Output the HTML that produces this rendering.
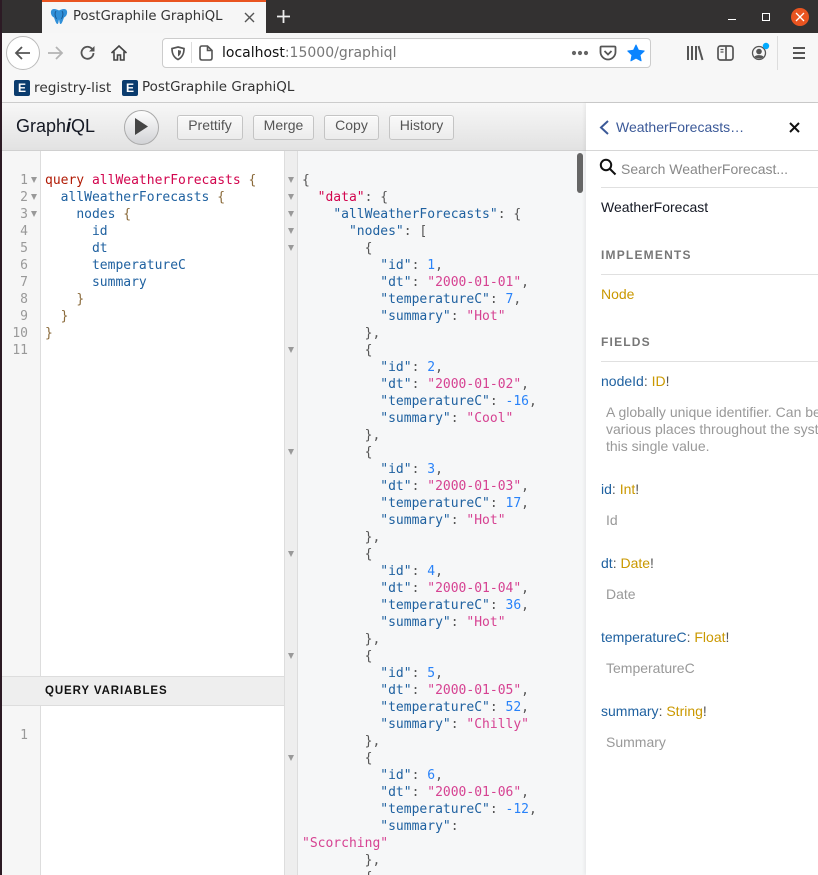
<!DOCTYPE html>
<html><head><meta charset="utf-8"><style>
html,body{margin:0;padding:0;width:818px;height:875px;overflow:hidden;background:#fff}
body{position:relative;font-family:"Liberation Sans",sans-serif}
.a{position:absolute}
pre{position:absolute;margin:0;font:13px/17px "DejaVu Sans Mono",monospace;white-space:pre}
.ui{font-family:"DejaVu Sans",sans-serif;position:absolute;white-space:nowrap}
.k{color:#b11a04}.d{color:#d2054e}.b{color:#555}.f{color:#1f61a0}
.s{color:#d64292}.n{color:#2882f9}.p{color:#555}.q{color:#1f61a0}.r{color:#d2054e}
.br{color:#8a6a3a}
.btn{position:absolute;top:115px;height:23px;border:1px solid #c4c4c4;border-radius:3px;background:linear-gradient(#f9f9f9,#ececec);box-shadow:0 1px 0 #fff inset;color:#555;font-size:14px;line-height:19px;text-align:center;box-sizing:content-box}
.m{position:absolute;width:0;height:0;border-left:3.5px solid transparent;border-right:3.5px solid transparent;border-top:6px solid #999}
.h{position:absolute;left:601px;font-size:14px;white-space:nowrap;line-height:17px}
.h i{font-style:normal;color:#1f61a0}.h u{text-decoration:none;color:#ca9800}.h b{font-weight:normal;color:#555}
.g{position:absolute;left:606px;width:212px;overflow:hidden;font-size:14px;line-height:17px;color:#999;white-space:nowrap}
.t{position:absolute;left:601px;font-size:12px;font-weight:bold;letter-spacing:1.2px;color:#777;line-height:14px}
.hr{position:absolute;left:601px;width:217px;height:1px;background:#e0e0e0}
</style></head><body>
<!-- left strip -->
<div class="a" style="left:0;top:0;width:2px;height:875px;background:#2c1a24"></div>
<!-- title bar -->
<div class="a" style="left:2px;top:0;width:816px;height:33px;background:#333131"></div>
<div class="a" style="left:42px;top:0;width:224px;height:33px;background:#f6f6f6"></div>
<div class="a" style="left:42px;top:0;width:224px;height:2px;background:#e95420"></div>
<svg class="a" style="left:50px;top:8px" width="18" height="18" viewBox="0 0 18 18"><path d="M4 1C1.500 1 .5 3 1 5.500C1.500 8 3 9 4 9.500C5 12 6 16 7.500 16C8.500 16 8.500 13 9 11.500C9.500 13 9.500 16 10.500 16C12 16 13 12 14 9.500C15 9 16.500 8 17 5.500C17.500 3 16.500 1 14 1C12 1 10 2 9 2.500C8 2 6 1 4 1Z" fill="#2f8fd8"/><path d="M6 3C4.500 5 5 8 6.500 11M12 3C13.500 5 13 8 11.500 11" stroke="#1a5a94" fill="none"/></svg>
<div class="ui" style="left:73px;top:8px;font-size:13.200px;line-height:18px;color:#333">PostGraphile GraphiQL</div>
<svg class="a" style="left:244px;top:12px" width="11" height="11"><path d="M1 1L10 10M10 1L1 10" stroke="#555" stroke-width="1.400"/></svg>
<svg class="a" style="left:276px;top:9px" width="15" height="15"><path d="M7.500 1V14M1 7.500H14" stroke="#eee" stroke-width="1.800"/></svg>
<div class="a" style="left:728px;top:19px;width:8px;height:1px;background:#fff"></div>
<div class="a" style="left:762px;top:13px;width:6px;height:6px;border:1.500px solid #fff"></div>
<div class="a" style="left:791px;top:8px;width:18px;height:18px;border-radius:50%;background:#e95420"></div>
<svg class="a" style="left:795px;top:12px" width="10" height="10"><path d="M1 1L9 9M9 1L1 9" stroke="#fff" stroke-width="1.300"/></svg>
<!-- nav bar -->
<div class="a" style="left:2px;top:33px;width:816px;height:70px;background:#f7f7f7"></div>
<div class="a" style="left:2px;top:102px;width:816px;height:1px;background:#ccc"></div>
<div class="a" style="left:6px;top:36px;width:32px;height:32px;border:1px solid #bbb;border-radius:50%;background:#fff"></div>
<svg class="a" style="left:13px;top:43px" width="20" height="20" fill="none" stroke="#555" stroke-width="1.800"><path d="M17 10H3M9 4L3 10L9 16"/></svg>
<svg class="a" style="left:46px;top:43px" width="20" height="20" fill="none" stroke="#b4b4b4" stroke-width="1.800"><path d="M2 10H16M10 4L16 10L10 16"/></svg>
<svg class="a" style="left:79px;top:44px" width="18" height="18" fill="none" stroke="#555" stroke-width="1.800"><path d="M14.500 9A6 6 0 1 1 12.500 4.300L15 6.500"/><path d="M15.500 2V7.500H10" fill="#555" stroke="none"/></svg>
<svg class="a" style="left:110px;top:44px" width="18" height="18" fill="none" stroke="#444" stroke-width="1.600"><path d="M1.500 9L9 2L16.500 9M4 7.500V16H7.500V11H10.500V16H14V7.500"/></svg>
<div class="a" style="left:162px;top:38px;width:487px;height:28px;border:1px solid #ccc;border-radius:4px;background:#fff"></div>
<svg class="a" style="left:170px;top:45px" width="16" height="16" fill="none" stroke="#555" stroke-width="1.700"><path d="M8 2L14 3.500C14 8 13 12 8 14.500C3 12 2 8 2 3.500Z"/><path d="M8 5L11 5.800C11 8 10.500 10 8 11.500Z" fill="#555" stroke="none"/></svg>
<div class="a" style="left:191px;top:42px;width:1px;height:21px;background:#ddd"></div>
<svg class="a" style="left:198px;top:45px" width="16" height="17" fill="none" stroke="#555" stroke-width="1.600"><path d="M2 3Q2 1 4 1H9.500L14 5.500V13Q14 15 12 15H4Q2 15 2 13ZM9.500 1V5.500H14"/></svg>
<div class="ui" style="left:222px;top:44px;font-size:14px;line-height:18px;color:#111">localhost<span style="color:#777">:15000/graphiql</span></div>
<svg class="a" style="left:571px;top:50px" width="18" height="6" fill="#666"><circle cx="3" cy="3" r="2.100"/><circle cx="9" cy="3" r="2.100"/><circle cx="15" cy="3" r="2.100"/></svg>
<svg class="a" style="left:599px;top:45px" width="18" height="16" fill="none" stroke="#555" stroke-width="1.800"><path d="M2.500 1.500H15.500Q16.500 1.500 16.500 2.500V7C16.500 11 13 14.500 9 14.500C5 14.500 1.500 11 1.500 7V2.500Q1.500 1.500 2.500 1.500Z"/><path d="M5.500 6L9 9.500L12.500 6"/></svg>
<svg class="a" style="left:627px;top:44px" width="18" height="18"><path d="M9 1L11.500 6.300L17.200 7L13 11L14.100 16.800L9 14L3.900 16.800L5 11L.8 7L6.500 6.300Z" fill="#0a84ff" stroke="#0a84ff" stroke-linejoin="round"/></svg>
<svg class="a" style="left:686px;top:45px" width="18" height="16" fill="none" stroke="#555" stroke-width="2"><path d="M2 1V15M6 1V15M10 1V15M12.500 1L16.500 15"/></svg>
<svg class="a" style="left:717px;top:45px" width="17" height="16" fill="none" stroke="#555" stroke-width="1.700"><rect x="1" y="1" width="15" height="14" rx="2.500"/><path d="M9 1V15"/><path d="M3.500 4.500H6.500M3.500 7H6.500" stroke-width="1.200"/></svg>
<svg class="a" style="left:750px;top:42px" width="22" height="20"><circle cx="9" cy="11" r="6.500" fill="none" stroke="#555" stroke-width="1.300"/><circle cx="9" cy="9.500" r="2.800" fill="#555"/><path d="M4.500 15C5 12.500 13 12.500 13.500 15C11 17 7 17 4.500 15Z" fill="#555"/><circle cx="16" cy="4" r="3.200" fill="#0af"/></svg>
<div class="a" style="left:777px;top:36px;width:1px;height:34px;background:#ddd"></div>
<svg class="a" style="left:792px;top:46px" width="14" height="14" fill="none" stroke="#555" stroke-width="2"><path d="M1 2H13M1 7H13M1 12H13"/></svg>
<!-- bookmarks -->
<div class="a" style="left:14px;top:80px;width:16px;height:16px;background:#0b3c6e;border-radius:2px;color:#fff;font:bold 12px/16px 'Liberation Sans',sans-serif;text-align:center">E</div>
<div class="ui" style="left:34px;top:79px;font-size:13.700px;line-height:18px;color:#333">registry-list</div>
<div class="a" style="left:122px;top:80px;width:16px;height:16px;background:#0b3c6e;border-radius:2px;color:#fff;font:bold 12px/16px 'Liberation Sans',sans-serif;text-align:center">E</div>
<div class="ui" style="left:142px;top:79px;font-size:13.450px;line-height:18px;color:#333">PostGraphile GraphiQL</div>
<!-- toolbar -->
<div class="a" style="left:2px;top:103px;width:584px;height:47px;background:linear-gradient(#f7f7f7,#e2e2e2)"></div>
<div class="a" style="left:2px;top:150px;width:584px;height:1px;background:#d0d0d0"></div>
<div class="a" style="left:16px;top:116px;font-size:18px;line-height:21px;color:#141823;white-space:nowrap">Graph<em style="font-style:italic;font-weight:bold;padding:0">i</em>QL</div>
<div class="a" style="left:124px;top:110px;width:33px;height:33px;border:1px solid #aaa;border-radius:50%;background:linear-gradient(#fdfdfd,#d2d3d6)"></div>
<svg class="a" style="left:135px;top:118px" width="14" height="17"><path d="M0 0L13 8.500L0 17Z" fill="#444"/></svg>
<div class="btn" style="left:177px;width:64px">Prettify</div>
<div class="btn" style="left:253px;width:59px">Merge</div>
<div class="btn" style="left:324px;width:53px">Copy</div>
<div class="btn" style="left:389px;width:63px">History</div>
<!-- query editor -->
<div class="a" style="left:2px;top:151px;width:38px;height:724px;background:#f6f6f6"></div>
<div class="a" style="left:40px;top:151px;width:1px;height:724px;background:#ddd"></div>
<pre style="left:2px;top:172px;width:26px;text-align:right;color:#999">1
2
3
4
5
6
7
8
9
10
11</pre>
<i class="m" style="left:31px;top:177px"></i><i class="m" style="left:31px;top:194px"></i><i class="m" style="left:31px;top:211px"></i>
<pre style="left:45px;top:172px"><span class="k">query</span> <span class="d">allWeatherForecasts</span> <span class="br">{</span>
  <span class="f">allWeatherForecasts</span> <span class="br">{</span>
    <span class="f">nodes</span> <span class="br">{</span>
      <span class="f">id</span>
      <span class="f">dt</span>
      <span class="f">temperatureC</span>
      <span class="f">summary</span>
    <span class="br">}</span>
  <span class="br">}</span>
<span class="br">}</span></pre>
<!-- variables header -->
<div class="a" style="left:2px;top:676px;width:282px;height:30px;background:#eee;border-top:1px solid #ddd;border-bottom:1px solid #ddd;box-sizing:border-box"></div>
<div class="a" style="left:45px;top:684px;font-size:11.500px;font-weight:bold;letter-spacing:.9px;line-height:14px;color:#111">QUERY VARIABLES</div>
<pre style="left:2px;top:727px;width:26px;text-align:right;color:#999">1</pre>
<!-- result -->
<div class="a" style="left:284px;top:151px;width:13px;height:724px;background:#eee"></div>
<div class="a" style="left:284px;top:151px;width:1px;height:724px;background:#ddd"></div>
<div class="a" style="left:297px;top:151px;width:1px;height:724px;background:#ddd"></div>
<div class="a" style="left:298px;top:151px;width:288px;height:724px;background:#f6f7f8"></div>
<i class="m" style="left:288px;top:177px"></i><i class="m" style="left:288px;top:194px"></i><i class="m" style="left:288px;top:211px"></i><i class="m" style="left:288px;top:228px"></i><i class="m" style="left:288px;top:245px"></i><i class="m" style="left:288px;top:347px"></i><i class="m" style="left:288px;top:449px"></i><i class="m" style="left:288px;top:551px"></i><i class="m" style="left:288px;top:653px"></i><i class="m" style="left:288px;top:755px"></i>
<div class="a" style="left:298px;top:151px;width:280px;height:724px;overflow:hidden">
<pre style="left:4px;top:21px"><span class="p">{</span>
  <span class="r">"data"</span><span class="p">: {</span>
    <span class="q">"allWeatherForecasts"</span><span class="p">: {</span>
      <span class="q">"nodes"</span><span class="p">: [</span>
        <span class="p">{</span>
          <span class="q">"id"</span><span class="p">:</span> <span class="n">1</span><span class="p">,</span>
          <span class="q">"dt"</span><span class="p">:</span> <span class="s">"2000-01-01"</span><span class="p">,</span>
          <span class="q">"temperatureC"</span><span class="p">:</span> <span class="n">7</span><span class="p">,</span>
          <span class="q">"summary"</span><span class="p">:</span> <span class="s">"Hot"</span>
        <span class="p">},</span>
        <span class="p">{</span>
          <span class="q">"id"</span><span class="p">:</span> <span class="n">2</span><span class="p">,</span>
          <span class="q">"dt"</span><span class="p">:</span> <span class="s">"2000-01-02"</span><span class="p">,</span>
          <span class="q">"temperatureC"</span><span class="p">:</span> <span class="n">-16</span><span class="p">,</span>
          <span class="q">"summary"</span><span class="p">:</span> <span class="s">"Cool"</span>
        <span class="p">},</span>
        <span class="p">{</span>
          <span class="q">"id"</span><span class="p">:</span> <span class="n">3</span><span class="p">,</span>
          <span class="q">"dt"</span><span class="p">:</span> <span class="s">"2000-01-03"</span><span class="p">,</span>
          <span class="q">"temperatureC"</span><span class="p">:</span> <span class="n">17</span><span class="p">,</span>
          <span class="q">"summary"</span><span class="p">:</span> <span class="s">"Hot"</span>
        <span class="p">},</span>
        <span class="p">{</span>
          <span class="q">"id"</span><span class="p">:</span> <span class="n">4</span><span class="p">,</span>
          <span class="q">"dt"</span><span class="p">:</span> <span class="s">"2000-01-04"</span><span class="p">,</span>
          <span class="q">"temperatureC"</span><span class="p">:</span> <span class="n">36</span><span class="p">,</span>
          <span class="q">"summary"</span><span class="p">:</span> <span class="s">"Hot"</span>
        <span class="p">},</span>
        <span class="p">{</span>
          <span class="q">"id"</span><span class="p">:</span> <span class="n">5</span><span class="p">,</span>
          <span class="q">"dt"</span><span class="p">:</span> <span class="s">"2000-01-05"</span><span class="p">,</span>
          <span class="q">"temperatureC"</span><span class="p">:</span> <span class="n">52</span><span class="p">,</span>
          <span class="q">"summary"</span><span class="p">:</span> <span class="s">"Chilly"</span>
        <span class="p">},</span>
        <span class="p">{</span>
          <span class="q">"id"</span><span class="p">:</span> <span class="n">6</span><span class="p">,</span>
          <span class="q">"dt"</span><span class="p">:</span> <span class="s">"2000-01-06"</span><span class="p">,</span>
          <span class="q">"temperatureC"</span><span class="p">:</span> <span class="n">-12</span><span class="p">,</span>
          <span class="q">"summary"</span><span class="p">:</span>
<span class="s">"Scorching"</span>
        <span class="p">},</span>
        <span class="p">{</span></pre></div>
<div class="a" style="left:577px;top:153px;width:6px;height:40px;border-radius:3px;background:#666"></div>
<!-- docs -->
<div class="a" style="left:586px;top:103px;width:232px;height:772px;background:#fff;box-shadow:-2px 0 3px rgba(0,0,0,.05)"></div>
<div class="a" style="left:586px;top:150px;width:232px;height:1px;background:#d6d6d6"></div>
<svg class="a" style="left:599px;top:120px" width="11" height="15" fill="none" stroke="#3b5998" stroke-width="2"><path d="M9 1L2 7.500L9 14"/></svg>
<div class="a" style="left:616px;top:119px;font-size:14px;line-height:17px;color:#3b5998">WeatherForecasts…</div>
<svg class="a" style="left:789px;top:122px" width="11" height="11"><path d="M1 1L10 10M10 1L1 10" stroke="#111" stroke-width="2"/></svg>
<svg class="a" style="left:599px;top:158px" width="18" height="18" fill="none" stroke="#111" stroke-width="2"><circle cx="7" cy="7" r="5.200"/><path d="M11 11L16.500 16.500"/></svg>
<div class="a" style="left:621px;top:161px;font-size:14px;line-height:17px;color:#888">Search WeatherForecast...</div>
<div class="hr" style="top:187px"></div>
<div class="a" style="left:601px;top:199px;font-size:14px;line-height:17px;color:#141823">WeatherForecast</div>
<div class="t" style="top:248px">IMPLEMENTS</div>
<div class="hr" style="top:274px"></div>
<div class="h" style="top:286px"><u>Node</u></div>
<div class="t" style="top:335px">FIELDS</div>
<div class="hr" style="top:361px"></div>
<div class="h" style="top:373px"><i>nodeId</i><b>: </b><u>ID</u><b>!</b></div>
<div class="g" style="top:404px">A globally unique identifier. Can be used in<br>various places throughout the system to identify<br>this single value.</div>
<div class="h" style="top:481px"><i>id</i><b>: </b><u>Int</u><b>!</b></div>
<div class="g" style="top:512px">Id</div>
<div class="h" style="top:555px"><i>dt</i><b>: </b><u>Date</u><b>!</b></div>
<div class="g" style="top:586px">Date</div>
<div class="h" style="top:629px"><i>temperatureC</i><b>: </b><u>Float</u><b>!</b></div>
<div class="g" style="top:660px">TemperatureC</div>
<div class="h" style="top:703px"><i>summary</i><b>: </b><u>String</u><b>!</b></div>
<div class="g" style="top:734px">Summary</div>
</body></html>
